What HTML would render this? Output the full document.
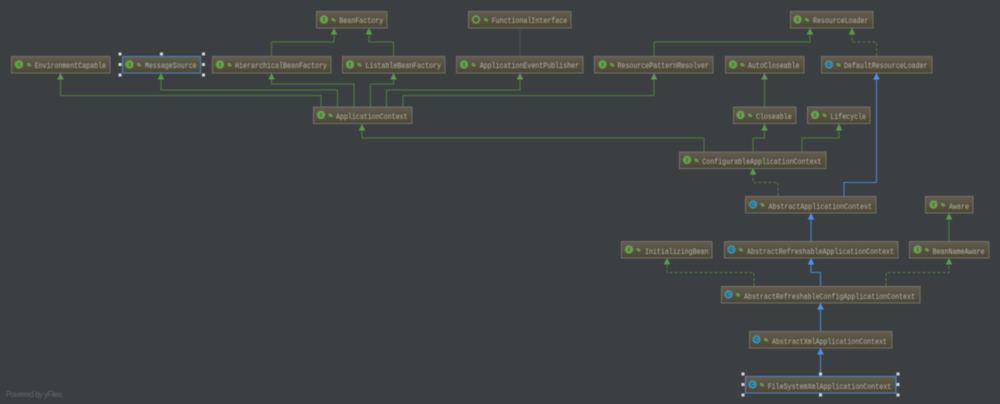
<!DOCTYPE html>
<html><head><meta charset="utf-8">
<style>
html,body{margin:0;padding:0;background:#3c3f41;width:1000px;height:404px;overflow:hidden}
svg{display:block;filter:blur(.4px)}
text.t{font-family:"Liberation Mono",monospace;font-size:8.4px;fill:#b4b4a9;transform:translateY(.8px)}
text.g{font-family:"Liberation Sans",sans-serif;font-weight:bold;font-size:5.500px;fill:#2f4a25;text-anchor:middle}
.b{fill:url(#grad);stroke:#72726c;stroke-width:1}
.i{fill:#699f4e}
.c{fill:#3a90ae}
.l{fill:#6a9a4a}
.e{fill:none;stroke:#4f7d44;stroke-width:1}
.d{fill:none;stroke:#4f7d44;stroke-width:1;stroke-dasharray:3 2}
.u{fill:none;stroke:#4a86cc;stroke-width:1.100}
.ga{fill:#5f9a4e}
.ba{fill:#4d94ee}
.h{fill:#d8d8d8}
</style></head><body>
<svg width="1000" height="404" viewBox="0 0 1000 404" xmlns="http://www.w3.org/2000/svg">
<defs><linearGradient id="grad" x1="0" y1="0" x2="0" y2="1"><stop offset="0" stop-color="#625c4c"/><stop offset="1" stop-color="#4b4636"/></linearGradient></defs>

<!-- edges -->
<path class="e" d="M321 107V95.500H60.500V73"/>
<path class="e" d="M337.500 107V90H161V73"/>
<path class="e" d="M354 107V84H271.500V73"/>
<path class="e" d="M271.500 56V42H334V28"/>
<path class="e" d="M393.500 56V42H369V28"/>
<path class="e" d="M370.500 107V84H393.500V73"/>
<path class="e" d="M386.500 107V90H520V73"/>
<path class="e" d="M403 107V95.500H654V73"/>
<path class="e" d="M654 56V42H810V28"/>
<path class="d" d="M876.500 56V42H852V28"/>
<path d="M520 56V28" fill="none" stroke="#5c5c50" stroke-width="1" stroke-dasharray="1 1"/>
<path class="e" d="M764.500 107V73"/>
<path class="e" d="M704 152V138H362V124"/>
<path class="e" d="M753 152V138H764.500V124"/>
<path class="e" d="M802 152V138H839V124"/>
<path class="d" d="M778 196V182.500H753V168"/>
<path class="u" d="M844 196V182.500H876.500V73"/>
<path class="e" d="M949 241V213"/>
<path class="u" d="M811 241V213"/>
<path class="u" d="M820.500 286V272.500H811V258"/>
<path class="d" d="M754 286V272.500H667V258"/>
<path class="d" d="M886 286V272.500H949V258"/>
<path class="u" d="M820.500 331V303"/>
<path class="u" d="M820.500 376V348"/>

<!-- arrowheads -->
<g class="ga">
<path d="M60.500 73l3.300 6.500h-6.600z"/><path d="M161 73l3.300 6.500h-6.600z"/><path d="M271.500 73l3.300 6.500h-6.600z"/>
<path d="M334 28l3.300 6.500h-6.600z"/><path d="M369 28l3.300 6.500h-6.600z"/><path d="M393.500 73l3.300 6.500h-6.600z"/>
<path d="M520 73l3.300 6.500h-6.600z"/><path d="M654 73l3.300 6.500h-6.600z"/><path d="M810 28l3.300 6.500h-6.600z"/>
<path d="M852 28l3.300 6.500h-6.600z"/><path d="M764.500 73l3.300 6.500h-6.600z"/><path d="M362 124l3.300 6.500h-6.600z"/>
<path d="M764.500 124l3.300 6.500h-6.600z"/><path d="M839 124l3.300 6.500h-6.600z"/><path d="M753 168l3.300 6.500h-6.600z"/>
<path d="M949 213l3.300 6.500h-6.600z"/><path d="M667 258l3.300 6.500h-6.600z"/><path d="M949 258l3.300 6.500h-6.600z"/>
</g>
<g class="ba">
<path d="M876.500 73l3.300 6.500h-6.600z"/><path d="M811 213l3.300 6.500h-6.600z"/><path d="M811 258l3.300 6.500h-6.600z"/>
<path d="M820.500 303l3.300 6.500h-6.600z"/><path d="M820.500 348l3.300 6.500h-6.600z"/>
</g>

<!-- nodes -->
<g>
<rect class="b" x="11.500" y="56.500" width="98.500" height="16.500"/>
<circle class="i" cx="19" cy="64.500" r="4.200"/><text class="g" x="19" y="66.400">I</text>
<path class="l" d="M27 63h2l2 1.500v2h-2.500l-1.500-1.500z"/>
<text class="t" x="34.700" y="67" textLength="71.300" lengthAdjust="spacingAndGlyphs">EnvironmentCapable</text>

<rect x="122.500" y="56.500" width="78" height="16.500" fill="url(#grad)" stroke="#4a88c8" stroke-width="1"/>
<circle class="i" cx="129.500" cy="64.500" r="4.200"/><text class="g" x="129.500" y="66.400">I</text>
<path class="l" d="M137 63h2l2 1.500v2h-2.500l-1.500-1.500z"/>
<text class="t" x="145" y="67" textLength="51.500" lengthAdjust="spacingAndGlyphs">MessageSource</text>

<rect class="b" x="212.500" y="56.500" width="118.500" height="16.500"/>
<circle class="i" cx="220" cy="64.500" r="4.200"/><text class="g" x="220" y="66.400">I</text>
<path class="l" d="M227.500 63h2l2 1.500v2h-2.500l-1.500-1.500z"/>
<text class="t" x="235" y="67" textLength="92" lengthAdjust="spacingAndGlyphs">HierarchicalBeanFactory</text>

<rect class="b" x="316.500" y="11.500" width="70.500" height="16.500"/>
<circle class="i" cx="324" cy="19.500" r="4.200"/><text class="g" x="324" y="21.400">I</text>
<path class="l" d="M331.500 18h2l2 1.500v2h-2.500l-1.500-1.500z"/>
<text class="t" x="339.300" y="22" textLength="44" lengthAdjust="spacingAndGlyphs">BeanFactory</text>

<rect class="b" x="342.500" y="56.500" width="102.500" height="16.500"/>
<circle class="i" cx="350" cy="64.500" r="4.200"/><text class="g" x="350" y="66.400">I</text>
<path class="l" d="M357.500 63h2l2 1.500v2h-2.500l-1.500-1.500z"/>
<text class="t" x="365.500" y="67" textLength="75.500" lengthAdjust="spacingAndGlyphs">ListableBeanFactory</text>

<rect class="b" x="313.500" y="107" width="98.500" height="16.500"/>
<circle class="i" cx="321" cy="115" r="4.200"/><text class="g" x="321" y="116.900">I</text>
<path class="l" d="M328.500 113.500h2l2 1.500v2h-2.500l-1.500-1.500z"/>
<text class="t" x="336" y="118" textLength="71.500" lengthAdjust="spacingAndGlyphs">ApplicationContext</text>

<rect class="b" x="468.500" y="11.500" width="102.500" height="16.500"/>
<circle cx="476" cy="19.500" r="3.300" fill="none" stroke="#699f4e" stroke-width="1.800"/>
<path class="l" d="M484 18h2l2 1.500v2h-2.500l-1.500-1.500z"/>
<text class="t" x="491.700" y="22" textLength="75.500" lengthAdjust="spacingAndGlyphs">FunctionalInterface</text>

<rect class="b" x="456.500" y="56.500" width="126.500" height="16.500"/>
<circle class="i" cx="464" cy="64.500" r="4.200"/><text class="g" x="464" y="66.400">I</text>
<path class="l" d="M471.500 63h2l2 1.500v2h-2.500l-1.500-1.500z"/>
<text class="t" x="479.700" y="67" textLength="99.300" lengthAdjust="spacingAndGlyphs">ApplicationEventPublisher</text>

<rect class="b" x="594.500" y="56.500" width="118.500" height="16.500"/>
<circle class="i" cx="602.500" cy="64.500" r="4.200"/><text class="g" x="602.500" y="66.400">I</text>
<path class="l" d="M610 63h2l2 1.500v2h-2.500l-1.500-1.500z"/>
<text class="t" x="617.500" y="67" textLength="91.500" lengthAdjust="spacingAndGlyphs">ResourcePatternResolver</text>

<rect class="b" x="790.500" y="11.500" width="82.500" height="16.500"/>
<circle class="i" cx="797.500" cy="19.500" r="4.200"/><text class="g" x="797.500" y="21.400">I</text>
<path class="l" d="M805 18h2l2 1.500v2h-2.500l-1.500-1.500z"/>
<text class="t" x="813" y="22" textLength="55.500" lengthAdjust="spacingAndGlyphs">ResourceLoader</text>

<rect class="b" x="725.500" y="56.500" width="78.500" height="16.500"/>
<circle class="i" cx="733" cy="64.500" r="4.200"/><text class="g" x="733" y="66.400">I</text>
<path class="l" d="M740.500 63h2l2 1.500v2h-2.500l-1.500-1.500z"/>
<text class="t" x="748" y="67" textLength="51.500" lengthAdjust="spacingAndGlyphs">AutoCloseable</text>

<rect class="b" x="821.500" y="56.500" width="110.500" height="16.500"/>
<circle class="c" cx="829" cy="64.500" r="4.200"/><text class="g" x="829" y="66.400" style="fill:#1d4f66">C</text>
<path class="l" d="M836.500 63h2l2 1.500v2h-2.500l-1.500-1.500z"/>
<text class="t" x="844" y="67" textLength="83.500" lengthAdjust="spacingAndGlyphs">DefaultResourceLoader</text>

<rect class="b" x="733.500" y="107" width="62.500" height="16.500"/>
<circle class="i" cx="740.500" cy="115" r="4.200"/><text class="g" x="740.500" y="116.900">I</text>
<path class="l" d="M748 113.500h2l2 1.500v2h-2.500l-1.500-1.500z"/>
<text class="t" x="756" y="118" textLength="35.700" lengthAdjust="spacingAndGlyphs">Closeable</text>

<rect class="b" x="807.500" y="107" width="62.500" height="16.500"/>
<circle class="i" cx="815" cy="115" r="4.200"/><text class="g" x="815" y="116.900">I</text>
<path class="l" d="M822.500 113.500h2l2 1.500v2h-2.500l-1.500-1.500z"/>
<text class="t" x="830.300" y="118" textLength="35.700" lengthAdjust="spacingAndGlyphs">Lifecycle</text>

<rect class="b" x="679.500" y="152" width="146.500" height="16.500"/>
<circle class="i" cx="687" cy="160" r="4.200"/><text class="g" x="687" y="161.900">I</text>
<path class="l" d="M694.500 158.500h2l2 1.500v2h-2.500l-1.500-1.500z"/>
<text class="t" x="702.300" y="163" textLength="119.200" lengthAdjust="spacingAndGlyphs">ConfigurableApplicationContext</text>

<rect class="b" x="745.500" y="196.500" width="130.500" height="16.500"/>
<circle class="c" cx="753" cy="204.500" r="4.200"/><text class="g" x="753" y="206.400" style="fill:#1d4f66">C</text>
<path class="l" d="M760.500 203h2l2 1.500v2h-2.500l-1.500-1.500z"/>
<text class="t" x="768.500" y="208" textLength="103.500" lengthAdjust="spacingAndGlyphs">AbstractApplicationContext</text>

<rect class="b" x="925.500" y="196.500" width="47.500" height="16.500"/>
<circle class="i" cx="933.500" cy="204.500" r="4.200"/><text class="g" x="933.500" y="206.400">I</text>
<path class="l" d="M941 203h2l2 1.500v2h-2.500l-1.500-1.500z"/>
<text class="t" x="949" y="208" textLength="20" lengthAdjust="spacingAndGlyphs">Aware</text>

<rect class="b" x="621.500" y="241.500" width="90.500" height="16.500"/>
<circle class="i" cx="629" cy="249.500" r="4.200"/><text class="g" x="629" y="251.400">I</text>
<path class="l" d="M636.500 248h2l2 1.500v2h-2.500l-1.500-1.500z"/>
<text class="t" x="645" y="253" textLength="63.500" lengthAdjust="spacingAndGlyphs">InitializingBean</text>

<rect class="b" x="724.500" y="241.500" width="173.500" height="16.500"/>
<circle class="c" cx="731.500" cy="249.500" r="4.200"/><text class="g" x="731.500" y="251.400" style="fill:#1d4f66">C</text>
<path class="l" d="M739 248h2l2 1.500v2h-2.500l-1.500-1.500z"/>
<text class="t" x="747" y="253" textLength="147" lengthAdjust="spacingAndGlyphs">AbstractRefreshableApplicationContext</text>

<rect class="b" x="909.500" y="241.500" width="79.500" height="16.500"/>
<circle class="i" cx="917.500" cy="249.500" r="4.200"/><text class="g" x="917.500" y="251.400">I</text>
<path class="l" d="M925 248h2l2 1.500v2h-2.500l-1.500-1.500z"/>
<text class="t" x="932.500" y="253" textLength="52" lengthAdjust="spacingAndGlyphs">BeanNameAware</text>

<rect class="b" x="721.500" y="286.500" width="198.500" height="16.500"/>
<circle class="c" cx="728.500" cy="294.500" r="4.200"/><text class="g" x="728.500" y="296.400" style="fill:#1d4f66">C</text>
<path class="l" d="M736 293h2l2 1.500v2h-2.500l-1.500-1.500z"/>
<text class="t" x="744" y="298" textLength="171" lengthAdjust="spacingAndGlyphs">AbstractRefreshableConfigApplicationContext</text>

<rect class="b" x="749.500" y="331.500" width="142.500" height="16.500"/>
<circle class="c" cx="756.500" cy="339.500" r="4.200"/><text class="g" x="756.500" y="341.400" style="fill:#1d4f66">C</text>
<path class="l" d="M764 338h2l2 1.500v2h-2.500l-1.500-1.500z"/>
<text class="t" x="772" y="343" textLength="115" lengthAdjust="spacingAndGlyphs">AbstractXmlApplicationContext</text>

<rect x="745.500" y="376.500" width="150.500" height="16.500" fill="url(#grad)" stroke="#4a88c8" stroke-width="1"/>
<circle class="c" cx="752.500" cy="384.500" r="4.200"/><text class="g" x="752.500" y="386.400" style="fill:#1d4f66">C</text>
<path class="l" d="M760 383h2l2 1.500v2h-2.500l-1.500-1.500z"/>
<text class="t" x="767.700" y="388" textLength="123.500" lengthAdjust="spacingAndGlyphs">FileSystemXmlApplicationContext</text>
</g>

<!-- selection handles -->
<g class="h">
<rect x="118.500" y="52.500" width="3" height="3"/><rect x="160" y="52.500" width="3" height="3"/><rect x="202" y="52.500" width="3" height="3"/>
<rect x="118.500" y="63" width="3" height="3"/><rect x="202" y="63" width="3" height="3"/>
<rect x="118.500" y="73.500" width="3" height="3"/><rect x="202" y="73.500" width="3" height="3"/>
<rect x="741.500" y="372.500" width="3" height="3"/><rect x="819" y="372.500" width="3" height="3"/><rect x="896.500" y="372.500" width="3" height="3"/>
<rect x="741.500" y="383" width="3" height="3"/><rect x="896.500" y="383" width="3" height="3"/>
<rect x="741.500" y="393.500" width="3" height="3"/><rect x="819" y="393.500" width="3" height="3"/><rect x="896.500" y="393.500" width="3" height="3"/>
</g>

<text x="6" y="397" font-family="Liberation Sans, sans-serif" font-size="7.800" fill="#64676a" textLength="56">Powered by yFiles</text>
</svg>
</body></html>
